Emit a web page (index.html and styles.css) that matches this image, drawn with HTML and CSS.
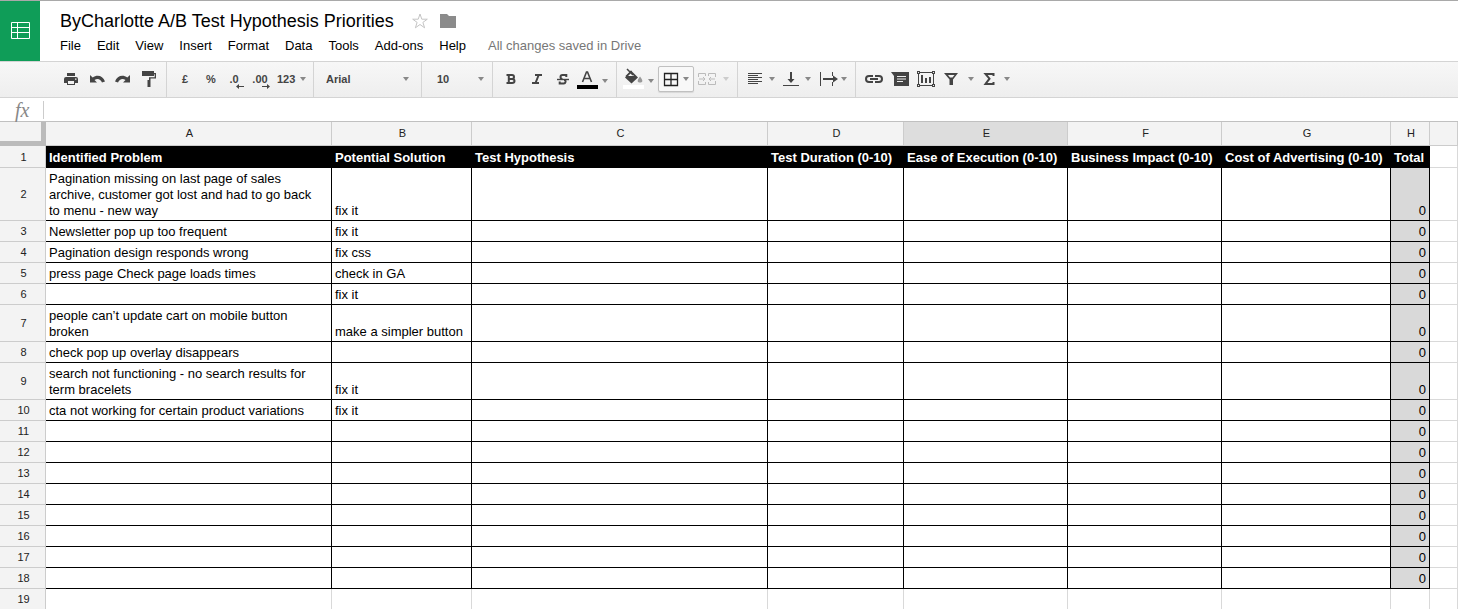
FILE: index.html
```html
<!DOCTYPE html>
<html lang="en">
<head>
<meta charset="UTF-8">
<meta name="viewport" content="width=device-width, initial-scale=1.0">
<title>ByCharlotte A/B Test Hypothesis Priorities</title>
<link rel="stylesheet" href="styles.css">
</head>
<body>

<header class="header">
  <a class="logo" href="#" aria-label="Sheets home">
    <svg width="20" height="17" viewBox="0 0 20 17" fill="none" stroke="#fff"><path d="M1.500 .5h18v16h-18zM1.500 5.500h18M1.500 10.500h18M7.500 .5v16"/></svg>
  </a>
  <div class="doc">
    <div class="title-row">
      <h1 class="title">ByCharlotte A/B Test Hypothesis Priorities</h1>
      <button class="plain" aria-label="Star">
        <svg width="16" height="16" viewBox="0 0 16 16" fill="none" stroke="#c4c4c4"><path d="M8 1l1.800 5.200h5.500L10.900 9.400l1.700 5.400L8 11.500 3.400 14.800l1.700-5.400L.7 6.200h5.500z"/></svg>
      </button>
      <button class="plain" aria-label="Folder">
        <svg width="16" height="14" viewBox="0 0 16 14" fill="#8b8b8b"><path d="M0 0h7l2 2h7v12H0z"/></svg>
      </button>
    </div>
    <nav class="menu">
      <button>File</button>
      <button>Edit</button>
      <button>View</button>
      <button>Insert</button>
      <button>Format</button>
      <button>Data</button>
      <button>Tools</button>
      <button>Add-ons</button>
      <button>Help</button>
      <span class="status">All changes saved in Drive</span>
    </nav>
  </div>
</header>

<div class="toolbar">
  <div class="group">
    <button class="tool" aria-label="Print">
      <svg width="16" height="16" viewBox="0 0 16 16" fill="#444"><path d="M4 2h8v3H4z"/><path fill-rule="evenodd" d="M3 6h10q2 0 2 2v4h-3v2H4v-2H1V8q0-2 2-2zm2 4v3h6v-3zm7-2.500v1.200h1.500V7.500z"/></svg>
    </button>
    <button class="tool" aria-label="Undo">
      <svg width="16" height="16" viewBox="0 0 16 16" fill="#444"><path d="M1 4v7.500h7L5.500 9C8.500 7 11.500 8 13 11.500l3-1C14 4.500 8 3 3.700 6.500z"/></svg>
    </button>
    <button class="tool" aria-label="Redo">
      <svg width="16" height="16" viewBox="0 0 16 16" fill="#444"><path d="M15 4v7.500H8L10.500 9C7.500 7 4.500 8 3 11.500l-3-1C2 4.500 8 3 12.300 6.500z"/></svg>
    </button>
    <button class="tool" aria-label="Paint format">
      <svg width="16" height="16" viewBox="0 0 16 16" fill="#444"><path d="M1 0h12v5H1zM13 2h2v5.500H9.500V9H8V6.200h5.700V3.200H13zM6.500 9h3v7h-3z"/></svg>
    </button>
  </div>
  <div class="group">
    <button class="tool">£</button>
    <button class="tool">%</button>
    <button class="tool decimals">.0
      <svg class="arrow" width="8" height="5" viewBox="0 0 8 5" fill="#444"><path d="M0 2.500L3 0v2h5v1H3v2z"/></svg>
    </button>
    <button class="tool decimals">.00
      <svg class="arrow" width="8" height="5" viewBox="0 0 8 5" fill="#444"><path d="M8 2.500L5 0v2H0v1h5v2z"/></svg>
    </button>
    <button class="tool drop formats"><span>123</span><i class="caret"></i></button>
  </div>
  <div class="group">
    <div class="select font">
      <select aria-label="Font"><option>Arial</option></select>
      <i class="caret"></i>
    </div>
  </div>
  <div class="group">
    <div class="select size">
      <select aria-label="Font size"><option>10</option></select>
      <i class="caret"></i>
    </div>
  </div>
  <div class="group">
    <button class="tool" aria-label="Bold">
      <svg width="16" height="16" viewBox="0 0 16 16" fill="none" stroke="#444" stroke-width="2"><path d="M3.500 4H9q2 0 2 2T9 8H5.500M9 8q2.500 0 2.500 2T9 12H3.500M5.800 4v8"/></svg>
    </button>
    <button class="tool" aria-label="Italic">
      <svg width="16" height="16" viewBox="0 0 16 16" fill="none" stroke="#444" stroke-width="2"><path d="M6 4h7M3 12h7M9.700 4l-3.200 8"/></svg>
    </button>
    <button class="tool" aria-label="Strikethrough">
      <svg width="16" height="16" viewBox="0 0 16 16" fill="none" stroke="#444" stroke-width="2"><path d="M11.300 6V4H7.500Q5.500 4 5.500 6t2 2M9 9q2 0 1.500 2T8 12.500H4.700V10.500"/><path d="M2 8.500h12" stroke-width="1.400"/></svg>
    </button>
    <button class="tool drop low" aria-label="Text colour">
      <svg width="22" height="22" viewBox="0 0 22 22"><path d="M6.500 14l4-10h1l4 10M8 10.500h6" fill="none" stroke="#444" stroke-width="1.600"/><path d="M1 17h21v4H1z"/></svg>
      <i class="caret"></i>
    </button>
  </div>
  <div class="group">
    <button class="tool drop low" aria-label="Fill colour">
      <svg width="22" height="22" viewBox="0 0 22 22" fill="#444"><path d="M9 2.500l7 7-6.500 6L3 9.500z"/><path d="M9 5L6 8h6z" fill="#f3f3f3"/><path d="M5 1l6 6M9.500 3L4 8.500" stroke="#444" stroke-width="1.500"/><path d="M18 8.500c4 5 2 6 0 6s-4-1 0-6z" fill="#999"/><path d="M1 17h21v4H1z" fill="#fff"/></svg>
      <i class="caret"></i>
    </button>
    <button class="tool drop active" aria-label="Borders">
      <svg width="16" height="16" viewBox="0 0 16 16" fill="none" stroke="#222"><path d="M1.500 2.500h13v12h-13zM8 2.500v12M1.500 8.500h13" stroke-width="1.300"/></svg>
      <i class="caret"></i>
    </button>
    <button class="tool drop wide disabled" aria-label="Merge cells" disabled>
      <svg width="18" height="16" viewBox="0 0 18 16" fill="none" stroke="#bbb"><path d="M7.500 5V2.500h-7V6M.5 10v3.500h7V11M10.500 5V2.500h7V6M17.500 10v3.500h-7V11M1 8h6M5 6l2 2-2 2M17 8h-6M13 6l-2 2 2 2"/></svg>
      <i class="caret"></i>
    </button>
  </div>
  <div class="group">
    <button class="tool drop" aria-label="Horizontal align">
      <svg width="16" height="16" viewBox="0 0 16 16" fill="none" stroke="#444"><path d="M1 2.500h14M1 4.500h10M1 6.500h14M1 8.500h10M1 10.500h14M1 12.500h10"/></svg>
      <i class="caret"></i>
    </button>
    <button class="tool drop" aria-label="Vertical align">
      <svg width="16" height="16" viewBox="0 0 16 16" fill="#444"><path d="M7 1h2v7h2.500L8 12 4.500 8H7zM0 14h16v1H0z"/></svg>
      <i class="caret"></i>
    </button>
    <button class="tool drop" aria-label="Text wrapping">
      <svg width="20" height="16" viewBox="0 0 20 16" fill="#444"><path d="M1 1h1v14H1zM13 1h1v4h-1zM13 11h1v4h-1zM4 7h10V4.500L19 8l-5 3.500V9H4z"/></svg>
      <i class="caret"></i>
    </button>
  </div>
  <div class="group last">
    <button class="tool" aria-label="Insert link">
      <svg width="20" height="16" viewBox="0 0 20 16" fill="none" stroke="#444" stroke-width="2"><path d="M9 5H5Q2 5 2 8t3 3h4M11 5h4q3 0 3 3t-3 3h-4M6 8h8"/></svg>
    </button>
    <button class="tool" aria-label="Insert comment">
      <svg width="18" height="16" viewBox="0 0 18 16" fill="#444"><path d="M0 1h18v14H3V5z"/><path d="M6 5.500h9M6 8h9M6 10.500h6" stroke="#eee"/></svg>
    </button>
    <button class="tool" aria-label="Insert chart">
      <svg width="20" height="18" viewBox="0 0 20 18" fill="#444"><path d="M2 2.500h16M2 15.500h16M2.500 2v14M17.500 2v14" stroke="#444"/><path d="M1 1h3v3H1zM16 1h3v3h-3zM1 14h3v3H1zM16 14h3v3h-3zM5 5h2v8H5zM9 8h2v5H9zM13 7h2v6h-2z"/><path d="M2 2h1v1H2zM17 2h1v1h-1zM2 15h1v1H2zM17 15h1v1h-1z" fill="#eee"/></svg>
    </button>
    <button class="tool drop wide" aria-label="Filter">
      <svg width="16" height="16" viewBox="0 0 16 16" fill="#444"><path fill-rule="evenodd" d="M1 2h14l-5 6.500V14H6.500V8.500zM5 4l2 2.500h2.500L11.500 4z"/></svg>
      <i class="caret"></i>
    </button>
    <button class="tool drop" aria-label="Functions">
      <svg width="14" height="16" viewBox="0 0 14 16" fill="none" stroke="#444" stroke-width="2"><path d="M11.500 5V3H3.500l4 4.700L3.500 13h8v-2"/></svg>
      <i class="caret"></i>
    </button>
  </div>
</div>

<div class="formula-bar">
  <label class="fx" for="formula">fx</label>
  <input class="formula" id="formula" type="text">
</div>

<table class="sheet">
  <colgroup>
    <col class="col-num"><col class="col-a"><col class="col-b"><col class="col-c"><col class="col-d"><col class="col-e"><col class="col-f"><col class="col-g"><col class="col-h"><col>
  </colgroup>
  <thead>
    <tr><th class="corner"></th><th>A</th><th>B</th><th>C</th><th>D</th><th class="selected">E</th><th>F</th><th>G</th><th>H</th><th></th></tr>
  </thead>
  <tbody class="data">
    <tr class="titles"><th>1</th><td>Identified Problem</td><td>Potential Solution</td><td>Test Hypothesis</td><td>Test Duration (0-10)</td><td>Ease of Execution (0-10)</td><td>Business Impact (0-10)</td><td>Cost of Advertising (0-10)</td><td>Total</td><td></td></tr>
    <tr><th>2</th><td>Pagination missing on last page of sales archive, customer got lost and had to go back to menu - new way</td><td>fix it</td><td></td><td></td><td></td><td></td><td></td><td class="total">0</td><td></td></tr>
    <tr><th>3</th><td>Newsletter pop up too frequent</td><td>fix it</td><td></td><td></td><td></td><td></td><td></td><td class="total">0</td><td></td></tr>
    <tr><th>4</th><td>Pagination design responds wrong</td><td>fix css</td><td></td><td></td><td></td><td></td><td></td><td class="total">0</td><td></td></tr>
    <tr><th>5</th><td>press page Check page loads times</td><td>check in GA</td><td></td><td></td><td></td><td></td><td></td><td class="total">0</td><td></td></tr>
    <tr><th>6</th><td></td><td>fix it</td><td></td><td></td><td></td><td></td><td></td><td class="total">0</td><td></td></tr>
    <tr><th>7</th><td>people can’t update cart on mobile button broken</td><td>make a simpler button</td><td></td><td></td><td></td><td></td><td></td><td class="total">0</td><td></td></tr>
    <tr><th>8</th><td>check pop up overlay disappears</td><td></td><td></td><td></td><td></td><td></td><td></td><td class="total">0</td><td></td></tr>
    <tr><th>9</th><td>search not functioning - no search results for term bracelets</td><td>fix it</td><td></td><td></td><td></td><td></td><td></td><td class="total">0</td><td></td></tr>
    <tr><th>10</th><td>cta not working for certain product variations</td><td>fix it</td><td></td><td></td><td></td><td></td><td></td><td class="total">0</td><td></td></tr>
    <tr><th>11</th><td></td><td></td><td></td><td></td><td></td><td></td><td></td><td class="total">0</td><td></td></tr>
    <tr><th>12</th><td></td><td></td><td></td><td></td><td></td><td></td><td></td><td class="total">0</td><td></td></tr>
    <tr><th>13</th><td></td><td></td><td></td><td></td><td></td><td></td><td></td><td class="total">0</td><td></td></tr>
    <tr><th>14</th><td></td><td></td><td></td><td></td><td></td><td></td><td></td><td class="total">0</td><td></td></tr>
    <tr><th>15</th><td></td><td></td><td></td><td></td><td></td><td></td><td></td><td class="total">0</td><td></td></tr>
    <tr><th>16</th><td></td><td></td><td></td><td></td><td></td><td></td><td></td><td class="total">0</td><td></td></tr>
    <tr><th>17</th><td></td><td></td><td></td><td></td><td></td><td></td><td></td><td class="total">0</td><td></td></tr>
    <tr><th>18</th><td></td><td></td><td></td><td></td><td></td><td></td><td></td><td class="total">0</td><td></td></tr>
  </tbody>
  <tbody>
    <tr><th>19</th><td></td><td></td><td></td><td></td><td></td><td></td><td></td><td></td><td></td></tr>
  </tbody>
</table>

</body>
</html>
```
FILE: styles.css
```css
* {
  box-sizing: border-box;
}
body {
  margin: 0;
  overflow: hidden;
  font-family: "Liberation Sans", Arial, sans-serif;
  font-size: 13px;
  color: #000;
  background: #fff;
}
button, input, select {
  margin: 0;
  padding: 0;
  border: 0;
  background: none;
  font: inherit;
  color: inherit;
}
svg {
  display: block;
  flex: none;
}

/* header */
.header {
  display: flex;
  height: 61px;
  border-top: 1px solid #a9a9a9;
}
.logo {
  display: flex;
  align-items: center;
  justify-content: center;
  width: 40px;
  padding-bottom: 2px;
  background: #0f9d58;
}
.doc {
  padding: 8px 0 0 20px;
}
.title-row {
  display: flex;
  align-items: center;
  gap: 12px;
  height: 24px;
}
.title {
  margin: 0 6px 0 0;
  font-size: 18px;
  font-weight: normal;
}
.menu {
  display: flex;
  align-items: center;
  gap: 16px;
  height: 24px;
}
.status {
  margin-left: 6px;
  color: #777;
}

/* toolbar */
.toolbar {
  display: flex;
  height: 37px;
  padding-left: 53px;
  border-top: 1px solid #d4d4d4;
  border-bottom: 1px solid #d4d4d4;
  background: linear-gradient(#f7f7f7, #eee);
  font-size: 11px;
  font-weight: bold;
  color: #444;
}
.group {
  display: flex;
  align-items: center;
  padding: 0 4px 2px 5px;
  border-right: 1px solid #d4d4d4;
}
.group.last {
  border-right: 0;
}
.tool {
  position: relative;
  display: flex;
  align-items: center;
  justify-content: center;
  width: 26px;
  height: 26px;
}
.decimals {
  padding-right: 6px;
}
.decimals .arrow {
  position: absolute;
  right: 6px;
  bottom: 3px;
}
.caret {
  flex: none;
  border: 3px solid transparent;
  border-top: 4px solid #888;
  border-bottom: 0;
}
.drop {
  justify-content: space-between;
  width: 36px;
  padding: 0 4px;
}
.drop.low {
  padding-left: 0;
}
.low .caret {
  margin-top: 4px;
}
.drop.wide {
  width: 39px;
}
.formats {
  width: 33px;
  padding: 0 3px 0 1px;
}
.active {
  border: 1px solid #c0c0c0;
  border-radius: 2px;
  background: #f8f8f8;
  box-shadow: 0 1px 1px rgba(0, 0, 0, 0.1);
}
.disabled .caret {
  border-top-color: #ccc;
}
.select {
  display: flex;
  align-items: center;
  padding-right: 8px;
}
.select select {
  flex: 1;
  appearance: none;
}
.font {
  width: 98px;
  padding-left: 7px;
}
.size {
  width: 61px;
  padding: 0 4px 0 10px;
}

/* formula bar */
.formula-bar {
  display: flex;
  align-items: center;
  height: 24px;
  border-bottom: 1px solid #c0c0c0;
}
.fx {
  width: 43px;
  padding-left: 15px;
  font: italic 20px/22px "Liberation Serif", serif;
  color: #888;
}
.formula {
  flex: 1;
  height: 18px;
  padding-left: 6px;
  border-left: 1px solid #ccc;
  outline: 0;
}

/* grid */
.sheet {
  width: 100%;
  table-layout: fixed;
  border-collapse: separate;
  border-spacing: 0;
}
.col-num { width: 46px; }
.col-a { width: 286px; }
.col-b { width: 140px; }
.col-c { width: 296px; }
.col-d { width: 136px; }
.col-e { width: 164px; }
.col-f { width: 154px; }
.col-g { width: 169px; }
.col-h { width: 39px; }

.sheet th {
  padding: 0 0 0 2px;
  border-right: 1px solid #ccc;
  border-bottom: 1px solid #ccc;
  background: #f3f3f3;
  font-size: 11px;
  font-weight: normal;
  color: #222;
}
.sheet thead th {
  height: 24px;
  padding-bottom: 2px;
}
.sheet .selected {
  background: #ddd;
}
.sheet .corner {
  border-right: 5px solid #bbb;
  border-bottom: 5px solid #bbb;
}
.sheet td {
  height: 21px;
  padding: 3px 7px 1px 3px;
  border-right: 1px solid #d9d9d9;
  border-bottom: 1px solid #d9d9d9;
  line-height: 16px;
  vertical-align: bottom;
}
.data td {
  border-color: #000;
}
.data td:last-child {
  border-color: #d9d9d9;
}
.titles td {
  height: 22px;
  font-weight: bold;
  color: #fff;
  background: #000;
  white-space: nowrap;
}
.titles td:last-child {
  background: #fff;
}
.sheet .total {
  padding-right: 3px;
  background: #d9d9d9;
  text-align: right;
}
```
